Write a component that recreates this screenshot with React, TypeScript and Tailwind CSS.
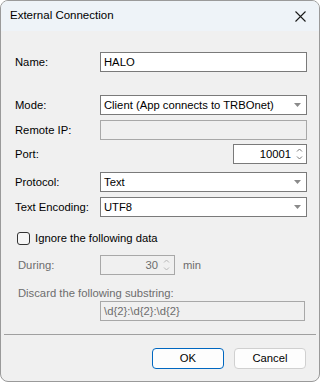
import React from "react";

const font = { fontFamily: '"Liberation Sans", Arial, sans-serif' };

const Arrow = () => (
  <svg width="7" height="4" viewBox="0 0 7 4" className="shrink-0">
    <path d="M0 0h7L3.5 4z" fill="#8a8a8a" />
  </svg>
);

const Spin = ({ light }: { light?: boolean }) => (
  <svg width="7" height="14" viewBox="0 0 7 14" className="shrink-0">
    <path
      d="M1 4.5 3.5 2 6 4.5M1 9.5 3.5 12 6 9.5"
      fill="none"
      stroke={light ? "#b8b8b8" : "#7a7a7a"}
      strokeWidth="1"
    />
  </svg>
);

const Label = ({ children }: { children: React.ReactNode }) => (
  <div className="w-[85px] shrink-0 text-[11.25px] leading-[14px] text-black">{children}</div>
);

const Select = ({ value }: { value: string }) => (
  <div className="flex h-[20px] w-[207px] items-center justify-between border border-[#7a7a7a] bg-white pl-[3px] pr-[5px] text-[11.25px]">
    <span>{value}</span>
    <Arrow />
  </div>
);

export default function App() {
  return (
    <div className="h-[383px] w-[321px] bg-white" style={font}>
      <div className="flex h-[382px] w-[320px] flex-col overflow-hidden rounded-lg border border-[#9a9a9a] bg-[#f0f0f0]">
        <div className="flex h-[30px] shrink-0 items-center justify-between bg-[#eef3f8] pl-[9px] pr-[13px]">
          <span className="text-[11.5px] text-black">External Connection</span>
          <svg width="11" height="11" viewBox="0 0 11 11">
            <path d="M.5.5l10 10M10.5.5l-10 10" stroke="#1a1a1a" strokeWidth="1.1" />
          </svg>
        </div>

        <div className="flex flex-col pl-[14px]">
          <div className="mt-[21px] flex items-center">
            <Label>Name:</Label>
            <div className="flex h-[20px] w-[207px] items-center border border-[#7a7a7a] bg-white pl-[3px] text-[11.25px]">
              HALO
            </div>
          </div>

          <div className="mt-[23px] flex items-center">
            <Label>Mode:</Label>
            <Select value="Client (App connects to TRBOnet)" />
          </div>

          <div className="mt-[5px] flex items-center">
            <Label>Remote IP:</Label>
            <div className="h-[20px] w-[207px] border border-[#a8a8a8] bg-[#f0f0f0]" />
          </div>

          <div className="mt-[4px] flex items-center justify-between pr-[12px]">
            <Label>Port:</Label>
            <div className="flex h-[20px] w-[74px] items-center justify-end gap-[5px] border border-[#7a7a7a] bg-white pr-[3px] text-[11.25px]">
              <span>10001</span>
              <Spin />
            </div>
          </div>

          <div className="mt-[8px] flex items-center">
            <Label>Protocol:</Label>
            <Select value="Text" />
          </div>

          <div className="mt-[5px] flex items-center">
            <Label>Text Encoding:</Label>
            <Select value="UTF8" />
          </div>

          <div className="mt-[14px] flex h-[14px] items-center gap-[5px] pl-[2px]">
            <div className="h-[13px] w-[13px] rounded-[3px] border border-[#333] bg-[#f6f6f6]" />
            <span className="text-[11.25px] leading-[14px]">Ignore the following data</span>
          </div>

          <div className="mt-[10px] flex items-center pl-[3px]">
            <div className="w-[82px] shrink-0 text-[11.25px] leading-[14px] text-[#6d6d6d]">During:</div>
            <div className="flex h-[20px] w-[75px] items-center justify-end gap-[5px] border border-[#a8a8a8] pr-[4px] text-[11.25px] text-[#6d6d6d]">
              <span>30</span>
              <Spin light />
            </div>
            <span className="ml-[8px] text-[11.25px] leading-[14px] text-[#6d6d6d]">min</span>
          </div>

          <div className="mt-[11px] h-[14px] pl-[3px] text-[11.25px] leading-[14px] text-[#6d6d6d]">
            Discard the following substring:
          </div>

          <div className="mt-[1px] flex items-center pl-[85px]">
            <div className="flex h-[20px] w-[205px] items-center border border-[#a8a8a8] pl-[3px] text-[11.25px] text-[#6d6d6d]">
              {"\\d{2}:\\d{2}:\\d{2}"}
            </div>
          </div>
        </div>

        <div className="ml-[3px] mr-[3px] mt-[13px] h-px shrink-0 bg-[#a0a0a0]" />

        <div className="mt-[13px] flex justify-end gap-[10px] pr-[13px]">
          <button className="flex h-[21px] w-[72px] items-center justify-center rounded-[4px] border border-[#0067c0] bg-[#fdfdfd] text-[11.25px] text-black">
            OK
          </button>
          <button className="flex h-[21px] w-[72px] items-center justify-center rounded-[4px] border border-[#d0d0d0] bg-[#fdfdfd] text-[11.25px] text-black">
            Cancel
          </button>
        </div>
      </div>
    </div>
  );
}
